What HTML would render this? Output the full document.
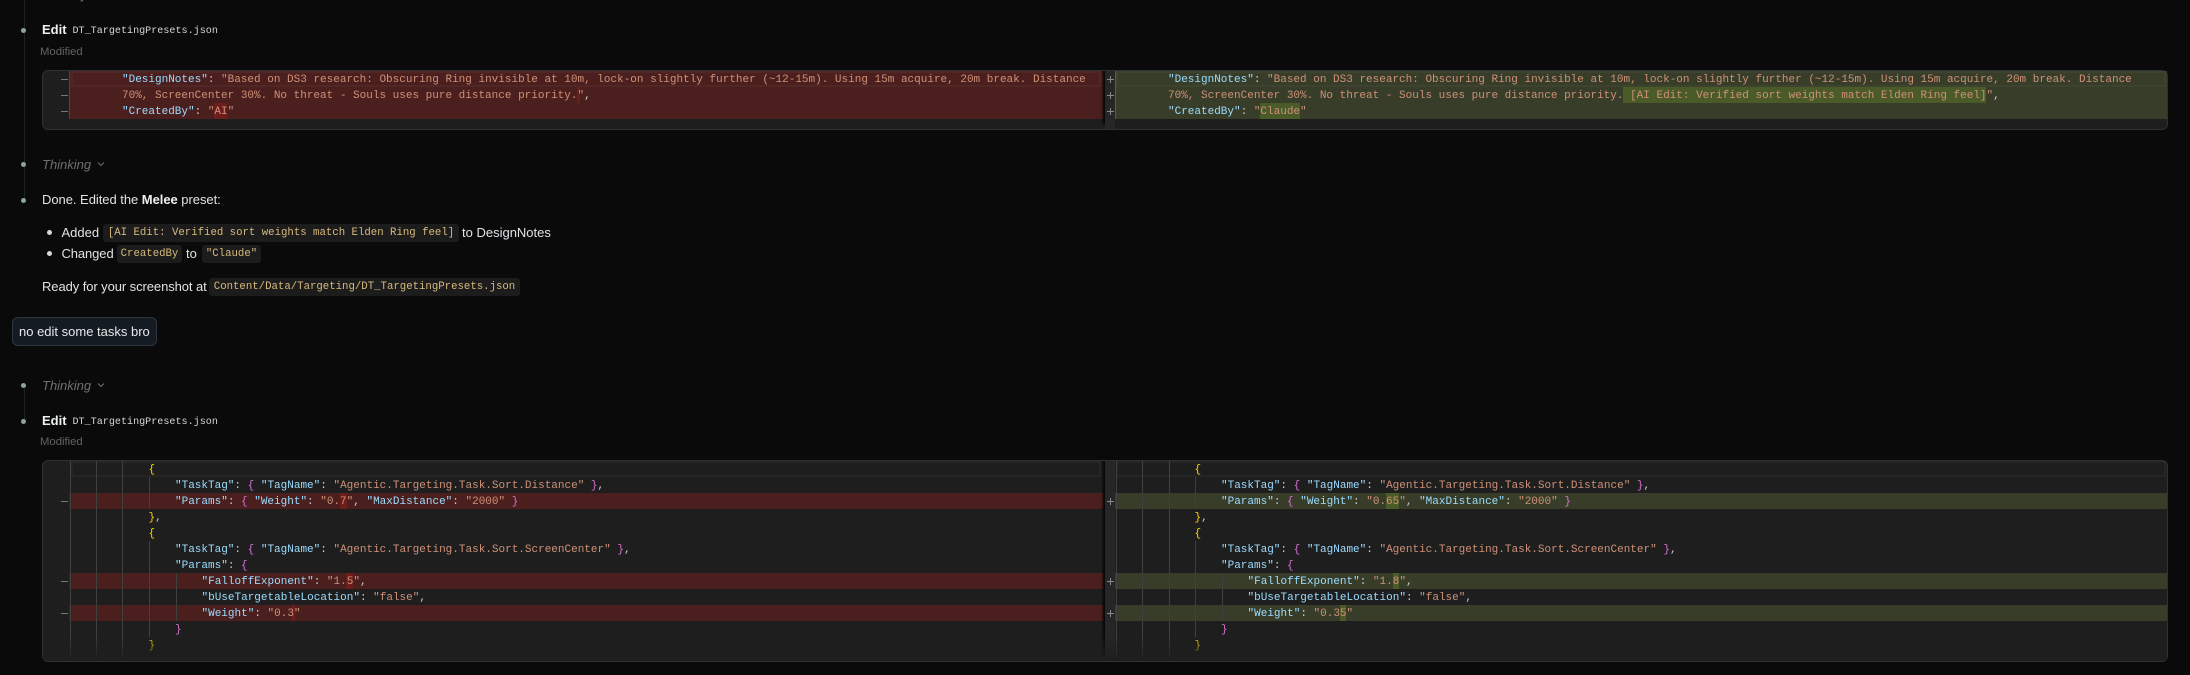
<!DOCTYPE html>
<html>
<head>
<meta charset="utf-8">
<style>
html,body{margin:0;padding:0;background:#0a0a0a;}
body{width:2190px;height:675px;overflow:hidden;position:relative;font-family:"Liberation Sans",sans-serif;}
.a{position:absolute;}
.t{position:absolute;white-space:pre;font-size:13px;line-height:18px;height:18px;color:#dfe3e6;}
.t b{color:#eef1f3;}
.c{font-family:"Liberation Mono",monospace;font-size:10.7px;color:#d7ba7d;letter-spacing:0;background:#1c1c1c;border-radius:3px;position:absolute;height:18px;line-height:18px;white-space:pre;text-align:center;box-sizing:border-box;}
.f{position:absolute;font-family:"Liberation Mono",monospace;font-size:10.1px;line-height:16px;color:#d6d6d6;white-space:pre;}
.dot{position:absolute;width:5px;height:5px;border-radius:50%;background:#8fa39b;left:21px;}
.bul{position:absolute;width:5px;height:5px;border-radius:50%;background:#d4d8da;left:46.5px;}
.mod{position:absolute;left:40px;font-size:11.3px;line-height:14px;color:#636363;white-space:pre;}
.th{position:absolute;left:42px;font-size:13px;line-height:18px;color:#6f6f6f;font-style:italic;white-space:pre;}
.box{position:absolute;left:42px;width:2126px;background:#1e1e1e;border:1px solid #2b3238;border-radius:6px;box-sizing:border-box;overflow:hidden;}
.r{position:absolute;height:16px;}
.red{background:#4b1f1e;left:69px;width:1034px;}
.grn{background:#373d29;left:1115px;width:1053px;}
.hr{background:#6c1e1c;}
.hg{background:#4b5b27;}
.l{position:absolute;margin-top:1px;font-family:"Liberation Mono",monospace;font-size:11px;line-height:16px;height:16px;white-space:pre;color:#cccccc;}
.k{color:#9cdcfe;}.s{color:#ce9178;}.y{color:#ffd700;}.m{color:#da70d6;}.b{color:#179fff;}
.g{position:absolute;width:1px;background:#404040;}
.mi{position:absolute;left:61px;width:7px;height:1px;background:#777;}
.pl{position:absolute;left:1106.5px;width:7px;height:1px;background:#8a8a8a;}
.pl:after{content:"";position:absolute;left:3px;top:-3px;width:1px;height:7px;background:#8a8a8a;}
.gut{position:absolute;left:1105px;width:10px;background:#262626;}
.sh{position:absolute;left:1101px;width:4px;background:linear-gradient(90deg,rgba(0,0,0,0),#050505);}
.cur{position:absolute;height:16px;box-sizing:border-box;border:2px solid rgba(255,255,255,.035);}
.v{position:absolute;left:24px;width:1px;background:#1d2227;}
</style>
</head>
<body>
<div class="v" style="top:0;height:200px"></div>
<div class="v" style="top:386px;height:35px"></div>
<div class="t" style="left:80px;top:-14px;color:#777">y</div>

<div class="dot" style="top:28px"></div>
<div class="t" style="left:42px;top:21px"><b>Edit</b></div>
<div class="f" style="left:72.5px;top:24px">DT_TargetingPresets.json</div>
<div class="mod" style="top:45px">Modified</div>

<!-- diff 1 -->
<div class="box" style="top:70px;height:60px"></div>
<div class="a" style="left:0;top:0;width:2190px;height:0">
<div class="r red" style="top:71px"></div>
<div class="r red" style="top:87px"></div>
<div class="r red" style="top:103px"></div>
<div class="r grn" style="top:71px;width:1052px"></div>
<div class="r grn" style="top:87px;width:1052px"></div>
<div class="r grn" style="top:103px;width:1052px"></div>
<div class="cur" style="left:71px;top:71px;width:1030px"></div>
<div class="cur" style="left:1116px;top:71px;width:1050px"></div>
<div class="r" style="left:69px;top:71px;width:1px;height:48px;background:#6a3a36"></div>
<div class="r" style="left:1115px;top:71px;width:1px;height:48px;background:#5a6048"></div>
<div class="gut" style="top:71px;height:58px"></div>
<div class="sh" style="top:71px;height:53px"></div>
<div class="r hr" style="left:576.5px;top:87px;width:3px"></div>
<div class="r hr" style="left:214px;top:103px;width:13px"></div>
<div class="r hg" style="left:1260px;top:103px;width:40px"></div>
<div class="r hg" style="left:1623px;top:87px;width:363px"></div>
<div class="mi" style="top:79px"></div><div class="mi" style="top:95px"></div><div class="mi" style="top:111px"></div>
<div class="pl" style="top:79px"></div><div class="pl" style="top:95px"></div><div class="pl" style="top:111px"></div>

<div class="l" style="left:122px;top:71px"><span class="k">"DesignNotes"</span>: <span class="s">"Based on DS3 research: Obscuring Ring invisible at 10m, lock-on slightly further (~12-15m). Using 15m acquire, 20m break. Distance</span></div>
<div class="l" style="left:122px;top:87px"><span class="s">70%, ScreenCenter 30%. No threat - Souls uses pure distance priority."</span>,</div>
<div class="l" style="left:122px;top:103px"><span class="k">"CreatedBy"</span>: <span class="s">"AI"</span></div>
<div class="l" style="left:1168px;top:71px"><span class="k">"DesignNotes"</span>: <span class="s">"Based on DS3 research: Obscuring Ring invisible at 10m, lock-on slightly further (~12-15m). Using 15m acquire, 20m break. Distance</span></div>
<div class="l" style="left:1168px;top:87px"><span class="s">70%, ScreenCenter 30%. No threat - Souls uses pure distance priority. [AI Edit: Verified sort weights match Elden Ring feel]"</span>,</div>
<div class="l" style="left:1168px;top:103px"><span class="k">"CreatedBy"</span>: <span class="s">"Claude"</span></div>
</div>

<div class="dot" style="top:161.5px"></div>
<div class="th" style="top:156px">Thinking</div>
<svg class="a" style="left:97px;top:161px" width="8" height="6" viewBox="0 0 8 6"><path d="M1 1.5 L4 4.5 L7 1.5" fill="none" stroke="#6f6f6f" stroke-width="1"/></svg>

<div class="dot" style="top:197.5px"></div>
<div class="t" style="left:42px;top:191px;letter-spacing:-.04px">Done. Edited the <b>Melee</b> preset:</div>

<div class="bul" style="top:230px"></div>
<div class="t" style="left:61.5px;top:224px">Added</div>
<div class="c" style="left:103px;top:224px;width:356px">[AI Edit: Verified sort weights match Elden Ring feel]</div>
<div class="t" style="left:462px;top:224px">to DesignNotes</div>

<div class="bul" style="top:251px"></div>
<div class="t" style="left:61.5px;top:245px;letter-spacing:-.1px">Changed</div>
<div class="c" style="left:117px;top:245px;width:65px">CreatedBy</div>
<div class="t" style="left:186px;top:245px">to</div>
<div class="c" style="left:202px;top:245px;width:59px">"Claude"</div>

<div class="t" style="left:42px;top:278px;letter-spacing:-.08px">Ready for your screenshot at</div>
<div class="c" style="left:209px;top:278px;width:311px">Content/Data/Targeting/DT_TargetingPresets.json</div>

<div class="a" style="left:12px;top:317px;width:145px;height:29px;background:#151b23;border:1px solid #2f363d;border-radius:6px;box-sizing:border-box"></div>
<div class="t" style="left:19px;top:323px;color:#e6e8ea">no edit some tasks bro</div>

<div class="dot" style="top:382.5px"></div>
<div class="th" style="top:377px">Thinking</div>
<svg class="a" style="left:97px;top:382px" width="8" height="6" viewBox="0 0 8 6"><path d="M1 1.5 L4 4.5 L7 1.5" fill="none" stroke="#6f6f6f" stroke-width="1"/></svg>

<div class="dot" style="top:418.5px"></div>
<div class="t" style="left:42px;top:412px"><b>Edit</b></div>
<div class="f" style="left:72.5px;top:415px">DT_TargetingPresets.json</div>
<div class="mod" style="top:435px">Modified</div>

<!-- diff 2 -->
<div class="box" style="top:460px;height:202px"></div>
<div class="r red" style="top:493px"></div>
<div class="r red" style="top:573px"></div>
<div class="r red" style="top:605px"></div>
<div class="r grn" style="top:493px;width:1052px"></div>
<div class="r grn" style="top:573px;width:1052px"></div>
<div class="r grn" style="top:605px;width:1052px"></div>
<div class="cur" style="left:71px;top:461px;width:1030px"></div>
<div class="cur" style="left:1116px;top:461px;width:1050px"></div>
<div class="gut" style="top:461px;height:199px"></div>
<div class="sh" style="top:461px;height:195px"></div>
<div class="r hr" style="left:340px;top:493px;width:7px"></div>
<div class="r hr" style="left:346px;top:573px;width:7px"></div>
<div class="r hr" style="left:292px;top:605px;width:3px"></div>
<div class="r hg" style="left:1386px;top:493px;width:13px"></div>
<div class="r hg" style="left:1392.5px;top:573px;width:6.5px"></div>
<div class="r hg" style="left:1339.5px;top:605px;width:6.5px"></div>

<div class="g" style="left:69.5px;top:461px;height:197px"></div>
<div class="g" style="left:95.5px;top:461px;height:197px"></div>
<div class="g" style="left:122px;top:461px;height:197px"></div>
<div class="g" style="left:148.5px;top:477px;height:32px"></div>
<div class="g" style="left:148.5px;top:541px;height:96px"></div>
<div class="g" style="left:175.5px;top:573px;height:48px"></div>
<div class="g" style="left:1115.5px;top:461px;height:197px"></div>
<div class="g" style="left:1141.5px;top:461px;height:197px"></div>
<div class="g" style="left:1168.5px;top:461px;height:197px"></div>
<div class="g" style="left:1194.5px;top:477px;height:32px"></div>
<div class="g" style="left:1194.5px;top:541px;height:96px"></div>
<div class="g" style="left:1221.5px;top:573px;height:48px"></div>

<div class="mi" style="top:501px"></div><div class="mi" style="top:581px"></div><div class="mi" style="top:613px"></div>
<div class="pl" style="top:501px"></div><div class="pl" style="top:581px"></div><div class="pl" style="top:613px"></div>

<div class="l" style="left:148.5px;top:461px"><span class="y">{</span></div>
<div class="l" style="left:175px;top:477px"><span class="k">"TaskTag"</span>: <span class="m">{</span> <span class="k">"TagName"</span>: <span class="s">"Agentic.Targeting.Task.Sort.Distance"</span> <span class="m">}</span>,</div>
<div class="l" style="left:175px;top:493px"><span class="k">"Params"</span>: <span class="m">{</span> <span class="k">"Weight"</span>: <span class="s">"0.7"</span>, <span class="k">"MaxDistance"</span>: <span class="s">"2000"</span> <span class="m">}</span></div>
<div class="l" style="left:148.5px;top:509px"><span class="y">}</span>,</div>
<div class="l" style="left:148.5px;top:525px"><span class="y">{</span></div>
<div class="l" style="left:175px;top:541px"><span class="k">"TaskTag"</span>: <span class="m">{</span> <span class="k">"TagName"</span>: <span class="s">"Agentic.Targeting.Task.Sort.ScreenCenter"</span> <span class="m">}</span>,</div>
<div class="l" style="left:175px;top:557px"><span class="k">"Params"</span>: <span class="m">{</span></div>
<div class="l" style="left:201.5px;top:573px"><span class="k">"FalloffExponent"</span>: <span class="s">"1.5"</span>,</div>
<div class="l" style="left:201.5px;top:589px"><span class="k">"bUseTargetableLocation"</span>: <span class="s">"false"</span>,</div>
<div class="l" style="left:201.5px;top:605px"><span class="k">"Weight"</span>: <span class="s">"0.3"</span></div>
<div class="l" style="left:175px;top:621px"><span class="m">}</span></div>
<div class="l" style="left:148.5px;top:637px"><span class="y">}</span></div>

<div class="l" style="left:1194.5px;top:461px"><span class="y">{</span></div>
<div class="l" style="left:1221px;top:477px"><span class="k">"TaskTag"</span>: <span class="m">{</span> <span class="k">"TagName"</span>: <span class="s">"Agentic.Targeting.Task.Sort.Distance"</span> <span class="m">}</span>,</div>
<div class="l" style="left:1221px;top:493px"><span class="k">"Params"</span>: <span class="m">{</span> <span class="k">"Weight"</span>: <span class="s">"0.65"</span>, <span class="k">"MaxDistance"</span>: <span class="s">"2000"</span> <span class="m">}</span></div>
<div class="l" style="left:1194.5px;top:509px"><span class="y">}</span>,</div>
<div class="l" style="left:1194.5px;top:525px"><span class="y">{</span></div>
<div class="l" style="left:1221px;top:541px"><span class="k">"TaskTag"</span>: <span class="m">{</span> <span class="k">"TagName"</span>: <span class="s">"Agentic.Targeting.Task.Sort.ScreenCenter"</span> <span class="m">}</span>,</div>
<div class="l" style="left:1221px;top:557px"><span class="k">"Params"</span>: <span class="m">{</span></div>
<div class="l" style="left:1247.5px;top:573px"><span class="k">"FalloffExponent"</span>: <span class="s">"1.8"</span>,</div>
<div class="l" style="left:1247.5px;top:589px"><span class="k">"bUseTargetableLocation"</span>: <span class="s">"false"</span>,</div>
<div class="l" style="left:1247.5px;top:605px"><span class="k">"Weight"</span>: <span class="s">"0.35"</span></div>
<div class="l" style="left:1221px;top:621px"><span class="m">}</span></div>
<div class="l" style="left:1194.5px;top:637px"><span class="y">}</span></div>

<div class="a" style="left:43px;top:636px;width:2124px;height:24px;background:linear-gradient(180deg,rgba(30,30,30,0),rgba(30,30,30,.95))"></div>
</body>
</html>
